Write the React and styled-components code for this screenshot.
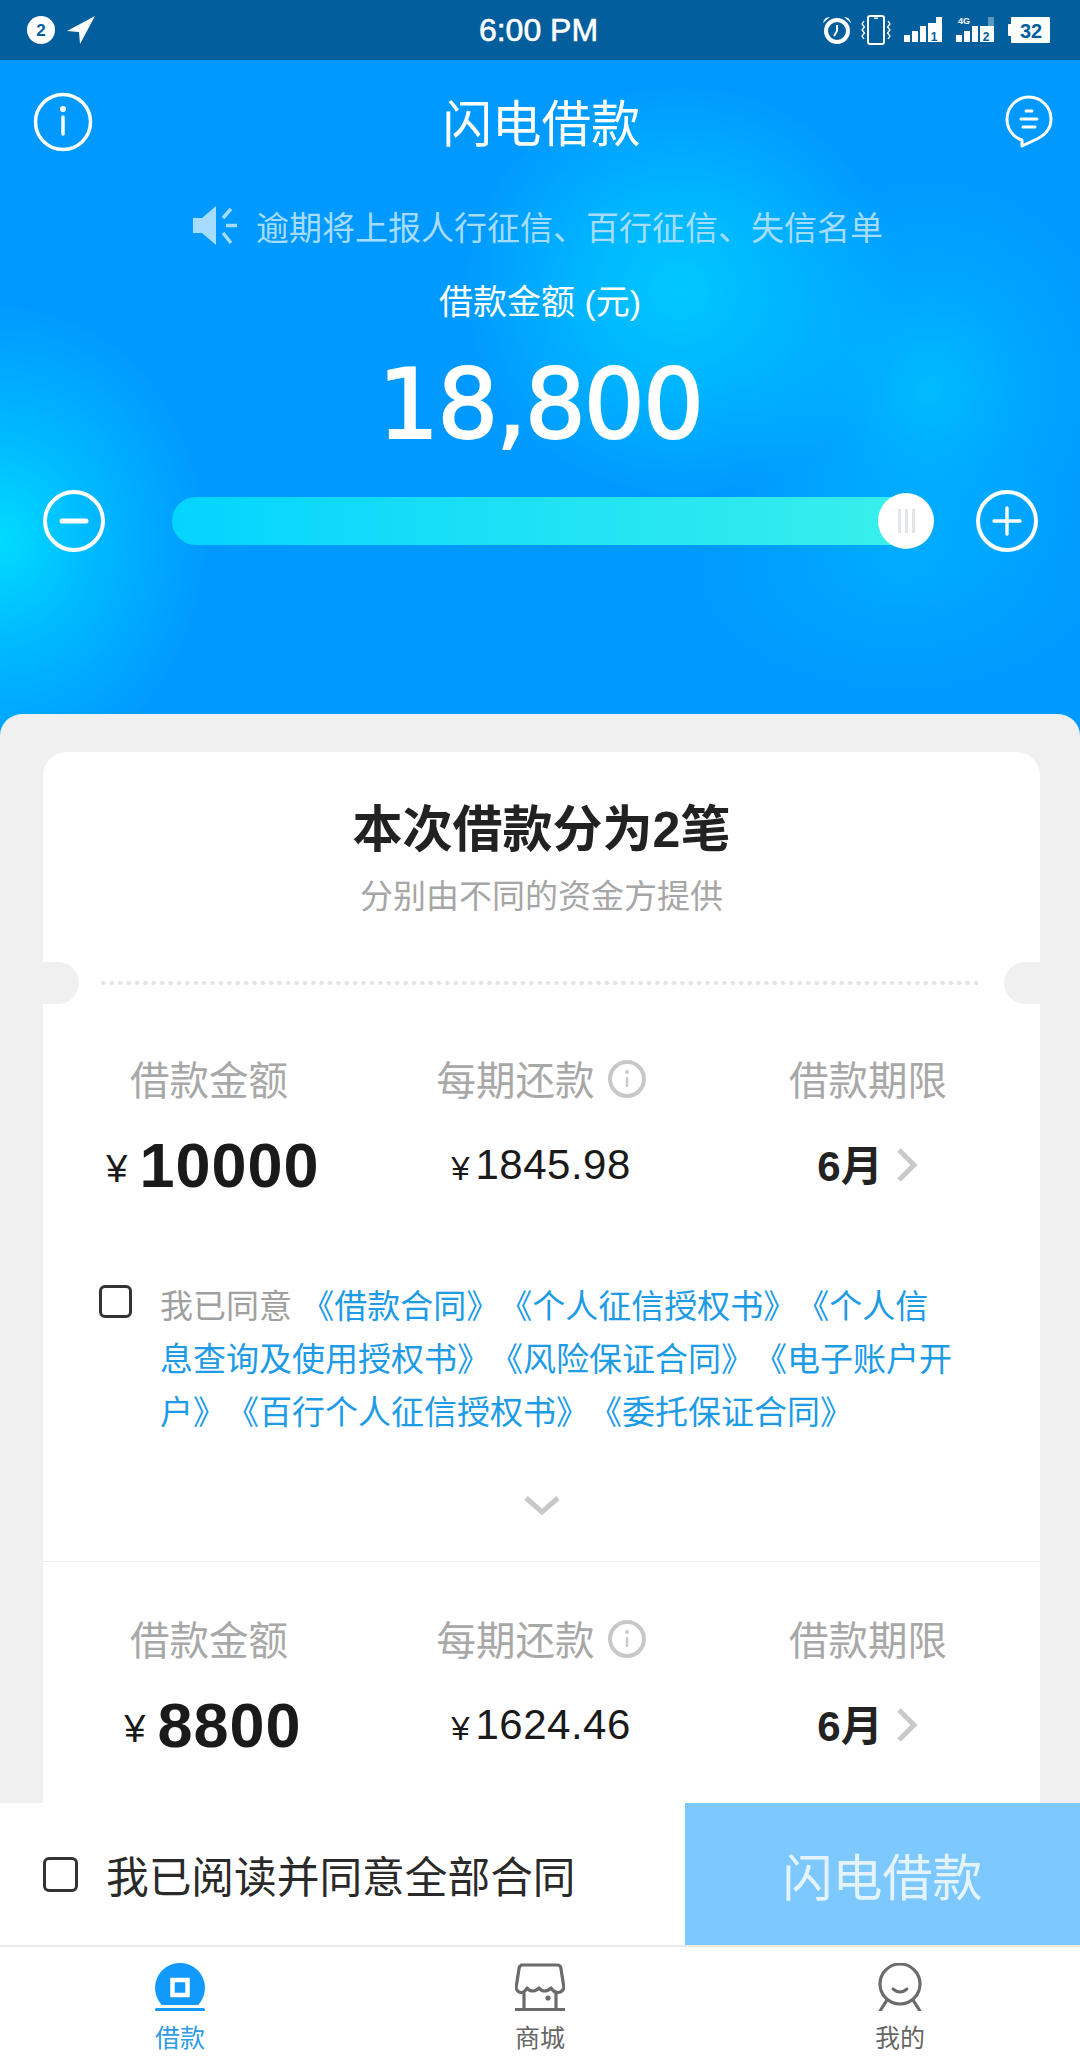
import React from "react";
import styled, { createGlobalStyle } from "styled-components";

const GlobalStyle = createGlobalStyle`
  html, body { margin: 0; padding: 0; }
  body { font-family: "Liberation Sans", "Noto Sans CJK SC", sans-serif; }
`;

const Page = styled.div`
  width: 1080px;
  height: 2060px;
  display: flex;
  flex-direction: column;
  overflow: hidden;
  background: #fff;
`;

const StatusBar = styled.div`
  height: 60px;
  flex: none;
  background: #025e9c;
  display: grid;
  grid-template-columns: 1fr auto 1fr;
  align-items: center;
  padding: 0 30px 0 27px;
  color: #fff;
`;

const StatusGroup = styled.div`
  display: flex;
  align-items: center;
  gap: ${(props) => props.$gap || 11}px;
  justify-content: ${(props) => (props.$end ? "flex-end" : "flex-start")};
`;

const Clock = styled.div`
  font-size: 32px;
  -webkit-text-stroke: 0.6px #fff;
`;

const Hero = styled.div`
  height: 678px;
  flex: none;
  display: flex;
  flex-direction: column;
  align-items: center;
  color: #fff;
  background:
    radial-gradient(ellipse 210px 240px at 0px 480px, #00dcff 0%, rgba(0, 210, 255, 0.55) 45%, rgba(0, 153, 255, 0) 100%),
    radial-gradient(ellipse 220px 210px at 680px 230px, #00c8ff 0%, rgba(0, 200, 255, 0.6) 45%, rgba(0, 153, 255, 0) 100%),
    radial-gradient(ellipse 200px 220px at 930px 330px, rgba(0, 195, 255, 0.8) 0%, rgba(0, 190, 255, 0.35) 50%, rgba(0, 153, 255, 0) 100%),
    radial-gradient(ellipse 220px 130px at 900px 510px, rgba(0, 185, 255, 0.5) 0%, rgba(0, 153, 255, 0) 100%),
    #0099ff;
`;

const NavRow = styled.div`
  width: 100%;
  height: 124px;
  box-sizing: border-box;
  padding: 0 27px 0 33px;
  display: grid;
  grid-template-columns: 1fr auto 1fr;
  align-items: center;
`;

const NavSide = styled.div`
  display: flex;
  justify-content: ${(props) => (props.$end ? "flex-end" : "flex-start")};
`;

const NavTitle = styled.div`
  font-size: 49.5px;
  font-weight: 400;
  padding: 0 3px 4px 0;
`;

const Notice = styled.div`
  margin-top: 20px;
  height: 44px;
  padding-right: 4px;
  display: flex;
  align-items: center;
  gap: 17px;
  font-size: 33px;
  color: #a5dcff;
`;

const AmountLabel = styled.div`
  margin-top: 33px;
  height: 42px;
  line-height: 42px;
  font-size: 34px;
`;

const AmountValue = styled.div`
  margin-top: 27px;
  height: 110px;
  line-height: 110px;
  font-family: "DejaVu Sans", "Liberation Sans", sans-serif;
  font-size: 96px;
  letter-spacing: -2px;
  -webkit-text-stroke: 2px #fff;
`;

const SliderRow = styled.div`
  margin-top: 30px;
  width: 100%;
  box-sizing: border-box;
  padding: 0 42px 0 43px;
  display: flex;
  align-items: center;
`;

const RoundButton = styled.div`
  width: 62px;
  height: 62px;
  flex: none;
  box-sizing: border-box;
  border: 4px solid #fff;
  border-radius: 50%;
  display: flex;
  align-items: center;
  justify-content: center;
  ${(props) => props.$end && "margin-left: auto;"}
`;

const Track = styled.div`
  position: relative;
  margin-left: 67px;
  width: 756px;
  height: 48px;
  border-radius: 24px;
  background: linear-gradient(90deg, #04d4ff 0%, #3af0ea 100%);
`;

const Thumb = styled.div`
  position: absolute;
  right: -6px;
  top: -4px;
  width: 56px;
  height: 56px;
  border-radius: 50%;
  background: #fff;
  display: flex;
  align-items: center;
  justify-content: center;
  gap: 4px;
`;

const ThumbLine = styled.span`
  width: 3px;
  height: 24px;
  background: #e2e6ea;
`;

const Sheet = styled.div`
  flex: 1;
  min-height: 0;
  margin-top: -24px;
  position: relative;
  overflow: hidden;
  box-sizing: border-box;
  background: #f0f0f0;
  border-radius: 22px 22px 0 0;
  border-top: 1px solid #dff3ff;
  padding: 37px 40px 0 43px;
`;

const Card = styled.div`
  position: relative;
  background: #fff;
  border-radius: 24px 24px 0 0;
  height: 1200px;
`;

const CardHead = styled.div`
  height: 210px;
  box-sizing: border-box;
  padding-top: 51px;
  text-align: center;
`;

const CardTitle = styled.div`
  font-size: 50px;
  line-height: 54px;
  font-weight: 700;
  color: #222;
`;

const CardSub = styled.div`
  margin-top: 20px;
  font-size: 33px;
  line-height: 40px;
  color: #a6a6a6;
`;

const Notch = styled.div`
  position: absolute;
  top: 210px;
  ${(props) => (props.$right ? "right: 0;" : "left: 0;")}
  width: 36px;
  height: 42px;
  background: #f0f0f0;
  border-radius: ${(props) => (props.$right ? "21px 0 0 21px" : "0 21px 21px 0")};
`;

const Dots = styled.div`
  margin: 19px 62px 0 58px;
  height: 4px;
  background-image: radial-gradient(circle at 2.5px 2px, #e3e3e3 2px, transparent 2.2px);
  background-size: 8.4px 4px;
`;

const LoanRow = styled.div`
  display: grid;
  grid-template-columns: 332px 332px 322px;
  padding-top: ${(props) => props.$top}px;
  text-align: center;
`;

const Cell = styled.div`
  display: flex;
  flex-direction: column;
  align-items: center;
`;

const CellLabel = styled.div`
  height: 50px;
  display: flex;
  align-items: center;
  gap: 13px;
  font-size: 39.5px;
  color: #a8a8a8;

  svg {
    margin-top: 3px;
  }
`;

const CellValue = styled.div`
  margin-top: 33px;
  height: 60px;
  display: flex;
  align-items: center;
  gap: ${(props) => props.$gap || 6}px;
  padding-left: ${(props) => props.$inset || 0}px;
  color: #1a1a1a;
`;

const Yen = styled.span`
  font-size: ${(props) => props.$size}px;
  padding-top: 8px;
`;

const BigNumber = styled.span`
  font-size: 63px;
  font-weight: 700;
  letter-spacing: 1px;
`;

const SmallNumber = styled.span`
  font-size: 42px;
  letter-spacing: 0.5px;
`;

const Term = styled.span`
  font-size: 42px;
  font-weight: 700;
  color: #222;
  margin-top: -5px;
`;

const Agreement = styled.div`
  margin-top: 85px;
  padding: 0 84px 0 56px;
  display: flex;
  gap: 28px;
`;

const CheckBox = styled.div`
  flex: none;
  width: 33px;
  height: 33px;
  margin-top: 5px;
  box-sizing: border-box;
  border: 3px solid #333;
  border-radius: 6px;
`;

const AgreementText = styled.div`
  font-size: 33px;
  line-height: 53px;
  text-spacing-trim: space-all;
`;

const Muted = styled.span`
  color: #a0a0a0;
`;

const ContractLinks = styled.span`
  color: #1d9be6;
`;

const Expand = styled.div`
  margin-top: 47px;
  height: 40px;
  display: flex;
  justify-content: center;
  align-items: center;
`;

const Divider = styled.div`
  margin-top: 35px;
  height: 1px;
  background: #ececec;
`;

const ActionBar = styled.div`
  height: 142px;
  flex: none;
  display: flex;
  background: #fff;
`;

const AgreeAll = styled.div`
  flex: 1;
  display: flex;
  align-items: center;
  gap: 28px;
  padding-left: 43px;
  font-size: 42.7px;
  color: #2a2a2a;
`;

const BigCheckBox = styled(CheckBox)`
  width: 35px;
  height: 35px;
  margin-top: 0;
`;

const SubmitButton = styled.div`
  width: 395px;
  display: flex;
  align-items: center;
  justify-content: center;
  font-size: 50px;
  color: #e4f4ff;
  background: #7dc8ff;
`;

const TabBar = styled.div`
  height: 115px;
  flex: none;
  box-sizing: border-box;
  border-top: 2px solid #e9e9e9;
  display: grid;
  grid-template-columns: repeat(3, 1fr);
  background: #fff;
`;

const Tab = styled.div`
  display: flex;
  flex-direction: column;
  align-items: center;
  padding-top: 16px;
  font-size: 25px;
  line-height: 30px;
  color: ${(props) => (props.$active ? "#2d9be5" : "#666")};
`;

const TabIcon = styled.svg`
  display: block;
  margin-bottom: 12px;
`;

const BadgeIcon = () => (
  <svg width="28" height="28" viewBox="0 0 28 28">
    <circle cx="14" cy="14" r="14" fill="#fff" />
    <text x="14" y="20" textAnchor="middle" fontSize="17" fontWeight="700" fill="#025e9c" fontFamily="Liberation Sans">2</text>
  </svg>
);

const LocationIcon = () => (
  <svg width="30" height="30" viewBox="0 0 30 30">
    <path d="M29 1 L1 16 L13 17 L14 29 Z" fill="#fff" />
  </svg>
);

const AlarmIcon = () => (
  <svg width="28" height="28" viewBox="0 0 28 28">
    <circle cx="14" cy="15" r="11" fill="none" stroke="#fff" strokeWidth="4" />
    <path d="M14 9 V15 L11 20" fill="none" stroke="#fff" strokeWidth="2" />
    <path d="M0 7 Q1 1 7 1 Z M28 7 Q27 1 21 1 Z" fill="#fff" />
  </svg>
);

const VibrateIcon = () => (
  <svg width="30" height="30" viewBox="0 0 30 30">
    <rect x="7" y="1" width="16" height="28" rx="2" fill="none" stroke="#fff" strokeWidth="2" />
    <path d="M13 3.2 H17" stroke="#fff" strokeWidth="1.4" />
    <path d="M3 6 L1 9 L3.5 12 L1 15 L3.5 18 L1 21 L3 24 M27 6 L29 9 L26.5 12 L29 15 L26.5 18 L29 21 L27 24" fill="none" stroke="#fff" strokeWidth="1.3" />
  </svg>
);

const SignalIcon = ({ sim, dim, net }) => (
  <svg width="39" height="30" viewBox="0 0 39 30">
    <rect x="0" y="20" width="6" height="7" fill="#fff" />
    <rect x="8" y="16" width="6" height="11" fill="#fff" />
    <rect x="16" y="11" width="6" height="16" fill="#fff" />
    <rect x="24" y={dim ? 11 : 8} width="14" height={dim ? 16 : 19} fill="#fff" />
    <rect x="32" y="2" width="6" height="9" fill="#fff" opacity={dim ? 0.35 : 1} />
    <text x="30" y="26" textAnchor="middle" fontSize="12" fontWeight="700" fill="#025e9c" fontFamily="Liberation Sans">{sim}</text>
    {net && (
      <text x="8" y="9" textAnchor="middle" fontSize="9" fontWeight="700" fill="#fff" fontFamily="Liberation Sans">{net}</text>
    )}
  </svg>
);

const BatteryIcon = () => (
  <svg width="42" height="27" viewBox="0 0 42 27">
    <rect x="3" y="0" width="39" height="26" rx="1" fill="#fff" />
    <rect x="0" y="7" width="4" height="12" rx="1" fill="#fff" />
    <text x="23" y="20.5" textAnchor="middle" fontSize="20" fontWeight="700" fill="#025e9c" fontFamily="Liberation Sans">32</text>
  </svg>
);

const InfoIcon = () => (
  <svg width="60" height="60" viewBox="0 0 60 60">
    <circle cx="30" cy="30" r="27.5" fill="none" stroke="#fff" strokeWidth="3.5" />
    <circle cx="30" cy="17" r="3" fill="#fff" />
    <path d="M30 25 V42" stroke="#fff" strokeWidth="3.5" strokeLinecap="round" />
  </svg>
);

const ChatIcon = () => (
  <svg width="48" height="56" viewBox="0 0 48 56">
    <path d="M17 46 C7 43 2 34 2 25 C2 13 12 3 24 3 C36 3 46 13 46 25 C46 34 40 41 32 45 L17 52 Z" fill="none" stroke="#fff" strokeWidth="3" strokeLinejoin="round" />
    <path d="M21 17 H27 M16 25 H32 M18 33 H30" stroke="#fff" strokeWidth="3" strokeLinecap="round" />
  </svg>
);

const SpeakerIcon = () => (
  <svg width="46" height="40" viewBox="0 0 46 40">
    <path d="M0 12 H9 L23 0 V39 L9 27 H0 Z" fill="#a5dcff" />
    <path d="M38 3 L30 12 M33 19.5 H44 M30 27 L38 37" stroke="#a5dcff" strokeWidth="3.4" />
  </svg>
);

const MinusGlyph = () => (
  <svg width="30" height="8" viewBox="0 0 30 8">
    <path d="M3 4 H27" stroke="#fff" strokeWidth="5" strokeLinecap="round" />
  </svg>
);

const PlusGlyph = () => (
  <svg width="30" height="30" viewBox="0 0 30 30">
    <path d="M2 15 H28 M15 2 V28" stroke="#fff" strokeWidth="3.4" strokeLinecap="round" />
  </svg>
);

const SmallInfo = () => (
  <svg width="38" height="38" viewBox="0 0 38 38">
    <circle cx="19" cy="19" r="17" fill="none" stroke="#c8c8c8" strokeWidth="4" />
    <circle cx="19" cy="12" r="2" fill="#c8c8c8" />
    <path d="M19 17 V27" stroke="#c8c8c8" strokeWidth="2.4" />
  </svg>
);

const ChevronRight = () => (
  <svg width="24" height="36" viewBox="0 0 24 36">
    <path d="M4 3 L19 18 L4 33" fill="none" stroke="#c9c9c9" strokeWidth="5" />
  </svg>
);

const ChevronDown = () => (
  <svg width="38" height="22" viewBox="0 0 38 22">
    <path d="M3 3 L19 17 L35 3" fill="none" stroke="#c8c8c8" strokeWidth="5" />
  </svg>
);

const LoanTab = () => (
  <TabIcon width="50" height="48" viewBox="0 0 50 48">
    <path d="M6.7 42 A25 25 0 1 1 43.3 42 Z" fill="#1199fb" />
    <rect x="17.5" y="17" width="15" height="15" fill="none" stroke="#fff" strokeWidth="4.5" />
    <rect x="0" y="45" width="50" height="3.4" rx="1.7" fill="#1199fb" />
  </TabIcon>
);

const ShopTab = () => (
  <TabIcon width="50" height="48" viewBox="0 0 50 48">
    <path d="M6 2 H42 Q46 2 46 6 L49 25 C46 31 40 31 36 25 C32 29 27 29 24 25 C20 29 15 29 12 25 C9 31 3 31 1 25 L4 6 Q4 2 8 2 Z" fill="none" stroke="#6b6b6b" strokeWidth="3.2" strokeLinejoin="round" />
    <path d="M9 30 V46 M41 30 V46 M0 46.5 H50" stroke="#6b6b6b" strokeWidth="3.2" />
    <circle cx="33" cy="35" r="2.6" fill="#6b6b6b" />
  </TabIcon>
);

const MineTab = () => (
  <TabIcon width="50" height="48" viewBox="0 0 50 48">
    <circle cx="25" cy="21" r="20" fill="none" stroke="#6b6b6b" strokeWidth="3.2" />
    <path d="M18 26 Q25 32 32 26" fill="none" stroke="#6b6b6b" strokeWidth="3" strokeLinecap="round" />
    <path d="M12 37 L5 48 M38 37 L45 48" stroke="#6b6b6b" strokeWidth="3.2" strokeLinecap="round" />
  </TabIcon>
);

const Loan = ({ top, amount, payment }) => (
  <LoanRow $top={top}>
    <Cell>
      <CellLabel>借款金额</CellLabel>
      <CellValue $gap={12} $inset={8}>
        <Yen $size={38}>¥</Yen>
        <BigNumber>{amount}</BigNumber>
      </CellValue>
    </Cell>
    <Cell>
      <CellLabel>
        每期还款
        <SmallInfo />
      </CellLabel>
      <CellValue>
        <Yen $size={33}>¥</Yen>
        <SmallNumber>{payment}</SmallNumber>
      </CellValue>
    </Cell>
    <Cell>
      <CellLabel>借款期限</CellLabel>
      <CellValue $gap={12}>
        <Term>6月</Term>
        <ChevronRight />
      </CellValue>
    </Cell>
  </LoanRow>
);

const App = () => {
  return (
    <Page>
      <GlobalStyle />
      <StatusBar>
        <StatusGroup $gap={11}>
          <BadgeIcon />
          <LocationIcon />
        </StatusGroup>
        <Clock>6:00 PM</Clock>
        <StatusGroup $end $gap={13}>
          <StatusGroup $gap={10}>
            <AlarmIcon />
            <VibrateIcon />
          </StatusGroup>
          <SignalIcon sim="1" />
          <SignalIcon sim="2" dim net="4G" />
          <BatteryIcon />
        </StatusGroup>
      </StatusBar>

      <Hero>
        <NavRow>
          <NavSide>
            <InfoIcon />
          </NavSide>
          <NavTitle>闪电借款</NavTitle>
          <NavSide $end>
            <ChatIcon />
          </NavSide>
        </NavRow>
        <Notice>
          <SpeakerIcon />
          逾期将上报人行征信、百行征信、失信名单
        </Notice>
        <AmountLabel>借款金额 (元)</AmountLabel>
        <AmountValue>18,800</AmountValue>
        <SliderRow>
          <RoundButton>
            <MinusGlyph />
          </RoundButton>
          <Track>
            <Thumb>
              <ThumbLine />
              <ThumbLine />
              <ThumbLine />
            </Thumb>
          </Track>
          <RoundButton $end>
            <PlusGlyph />
          </RoundButton>
        </SliderRow>
      </Hero>

      <Sheet>
        <Card>
          <CardHead>
            <CardTitle>本次借款分为2笔</CardTitle>
            <CardSub>分别由不同的资金方提供</CardSub>
          </CardHead>
          <Notch />
          <Notch $right />
          <Dots />
          <Loan top={67} amount="10000" payment="1845.98" />
          <Agreement>
            <CheckBox />
            <AgreementText>
              <Muted>我已同意 </Muted>
              <ContractLinks>
                《借款合同》《个人征信授权书》《个人信息查询及使用授权书》《风险保证合同》《电子账户开户》《百行个人征信授权书》《委托保证合同》
              </ContractLinks>
            </AgreementText>
          </Agreement>
          <Expand>
            <ChevronDown />
          </Expand>
          <Divider />
          <Loan top={50} amount="8800" payment="1624.46" />
        </Card>
      </Sheet>

      <ActionBar>
        <AgreeAll>
          <BigCheckBox />
          我已阅读并同意全部合同
        </AgreeAll>
        <SubmitButton>闪电借款</SubmitButton>
      </ActionBar>

      <TabBar>
        <Tab $active>
          <LoanTab />
          借款
        </Tab>
        <Tab>
          <ShopTab />
          商城
        </Tab>
        <Tab>
          <MineTab />
          我的
        </Tab>
      </TabBar>
    </Page>
  );
};

export default App;
